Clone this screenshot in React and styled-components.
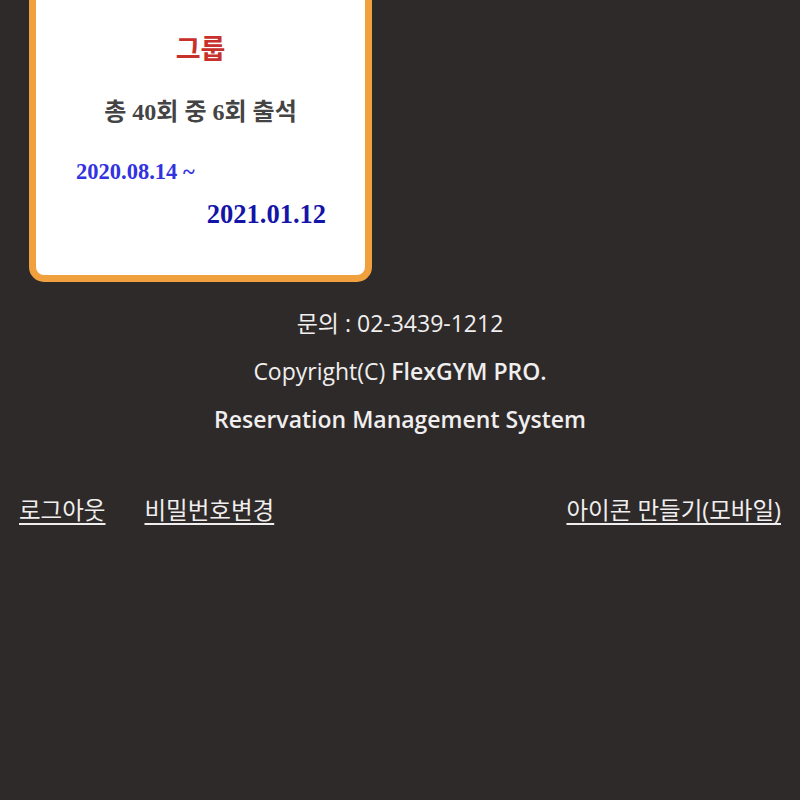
import React from 'react';
import styled, { createGlobalStyle } from 'styled-components';

const GlobalStyle = createGlobalStyle`
  html, body {
    margin: 0;
    padding: 0;
    background: #2e2a29;
    overflow: hidden;
  }
  body {
    font-family: "Open Sans", "Noto Sans CJK KR", sans-serif;
  }
`;

const Page = styled.div`
  min-height: 800px;
  background: #2e2a29;
  overflow: hidden;
`;

const CardRow = styled.div`
  padding-left: 29px;
  margin-top: -40px;
`;

const TicketCard = styled.div`
  width: 329px;
  height: 308px;
  box-sizing: content-box;
  background: #fff;
  border: 7px solid #f0a03c;
  border-radius: 15px;
  font-family: "Liberation Serif", "Noto Sans CJK KR", serif;
  font-weight: bold;
  display: flex;
  flex-direction: column;
`;

const Kind = styled.div`
  margin-top: 67px;
  text-align: center;
  color: #c8302b;
  font-size: 27px;
  line-height: 32px;
`;

const Count = styled.div`
  margin-top: 31px;
  text-align: center;
  color: #444;
  font-size: 24px;
  line-height: 30px;
`;

const DateText = styled.div`
  color: ${p => p.$end ? '#1414a8' : '#3232e0'};
  font-size: ${p => p.$end ? '26.5px' : '22.5px'};
  line-height: 30px;
  text-align: ${p => p.$end ? 'right' : 'left'};
  padding: ${p => p.$end ? '0 39px 0 0' : '0 0 0 40px'};
  margin-top: ${p => p.$end ? '12px' : '30px'};
`;

const Footer = styled.div`
  margin-top: 26px;
  display: flex;
  flex-direction: column;
  align-items: center;
  gap: 18px;
  color: #f0eeee;
  font-size: 23px;
  line-height: 30px;
`;

const Line = styled.div`
  font-weight: ${p => p.$bold ? 600 : 400};
`;

const Strong = styled.span`
  font-weight: 600;
`;

const LinkBar = styled.div`
  margin-top: 61px;
  display: flex;
  align-items: center;
  padding: 0 19px;
  gap: 39px;
  font-size: 23.5px;
  line-height: 30px;
`;

const Link = styled.a`
  color: #f0eeee;
  text-decoration: underline;
  text-underline-offset: 4px;
  cursor: pointer;
  margin-left: ${p => p.$push ? 'auto' : '0'};
`;

export default function App() {
  return (
    <Page>
      <GlobalStyle />
      <CardRow>
        <TicketCard>
          <Kind>그룹</Kind>
          <Count>총 40회 중 6회 출석</Count>
          <DateText>2020.08.14 ~</DateText>
          <DateText $end>2021.01.12</DateText>
        </TicketCard>
      </CardRow>
      <Footer>
        <Line>문의 : 02-3439-1212</Line>
        <Line>Copyright(C) <Strong>FlexGYM PRO.</Strong></Line>
        <Line $bold>Reservation Management System</Line>
      </Footer>
      <LinkBar>
        <Link>로그아웃</Link>
        <Link>비밀번호변경</Link>
        <Link $push>아이콘 만들기(모바일)</Link>
      </LinkBar>
    </Page>
  );
}
